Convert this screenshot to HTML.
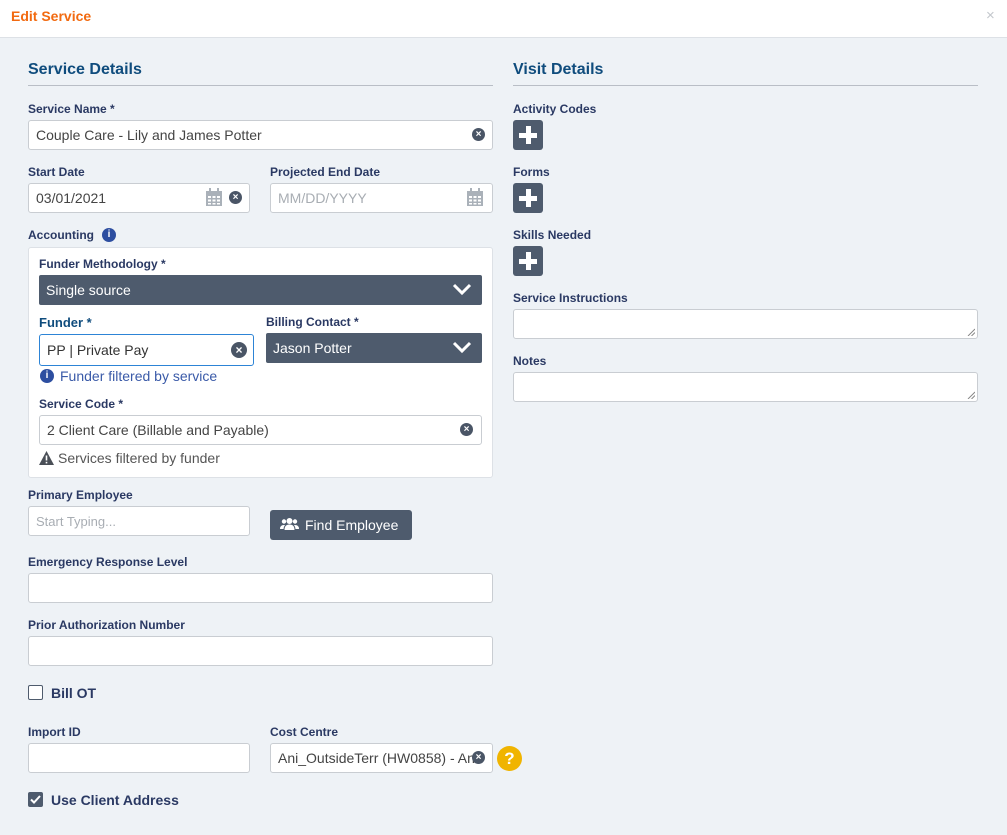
<!DOCTYPE html>
<html><head><meta charset="utf-8"><style>
*{box-sizing:border-box;margin:0;padding:0}
body{width:1007px;height:835px;background:#eef2f6;font-family:"Liberation Sans",Arial,sans-serif;position:relative;overflow:hidden}
.a{position:absolute}
.hdr{left:0;top:0;width:1007px;height:38px;background:#fff;border-bottom:1px solid #dde1e6}
.lbl{position:absolute;font-size:12px;font-weight:bold;color:#2a3963;line-height:14px}
.sec{position:absolute;font-size:16px;font-weight:bold;color:#0f4c7d}
.ln{position:absolute;height:1px;background:#b9bec6}
.in{position:absolute;background:#fff;border:1px solid #c9cdd2;border-radius:3px;font-size:14px;color:#444;padding-left:7px;display:flex;align-items:center}
.ph{color:#a8adb3}
.sel{position:absolute;background:#4e5b6d;border-radius:2px;color:#fff;font-size:14px;padding-left:7px;display:flex;align-items:center}
.x{position:absolute;width:13px;height:13px;border-radius:50%;background:#4a5566;color:#fff;font-size:10px;font-weight:bold;line-height:13px;text-align:center}
.plus{position:absolute;width:30px;height:30px;background:#4e5b6d;border-radius:3px}
.plus:before{content:"";position:absolute;left:6px;top:12.5px;width:18px;height:5px;background:#fff}
.plus:after{content:"";position:absolute;left:12.5px;top:6px;width:5px;height:18px;background:#fff}
.chev{position:absolute;right:10px;top:8px}
.rz{position:absolute;right:2px;bottom:2px}
</style></head><body>
<div class="a hdr"></div>
<div class="a" style="left:11px;top:8px;font-size:14px;font-weight:bold;color:#f26a10">Edit Service</div>
<div class="a" style="left:986px;top:7px;font-size:15px;color:#c3c7cc">×</div>

<div class="sec" style="left:28px;top:61px">Service Details</div>
<div class="ln" style="left:28px;top:85px;width:465px"></div>
<div class="sec" style="left:513px;top:61px">Visit Details</div>
<div class="ln" style="left:513px;top:85px;width:465px"></div>

<div class="lbl" style="left:28px;top:102px">Service Name *</div>
<div class="in" style="left:28px;top:120px;width:465px;height:30px">Couple Care - Lily and James Potter</div>
<div class="x" style="left:472px;top:128px">×</div>

<div class="lbl" style="left:28px;top:165px">Start Date</div>
<div class="in" style="left:28px;top:183px;width:222px;height:30px">03/01/2021</div>
<svg class="a" style="left:205px;top:188px" width="18" height="19" viewBox="0 0 18 19"><rect x="1" y="3" width="16" height="15" fill="#aab1b9"/><rect x="4" y="0" width="2" height="5" fill="#aab1b9"/><rect x="12" y="0" width="2" height="5" fill="#aab1b9"/><g fill="#fff"><rect x="3" y="8" width="3" height="2"/><rect x="7.5" y="8" width="3" height="2"/><rect x="12" y="8" width="3" height="2"/><rect x="3" y="11.5" width="3" height="2"/><rect x="7.5" y="11.5" width="3" height="2"/><rect x="12" y="11.5" width="3" height="2"/><rect x="3" y="15" width="3" height="1.5"/><rect x="7.5" y="15" width="3" height="1.5"/><rect x="12" y="15" width="3" height="1.5"/></g></svg>
<div class="x" style="left:229px;top:191px">×</div>
<div class="lbl" style="left:270px;top:165px">Projected End Date</div>
<div class="in ph" style="left:270px;top:183px;width:223px;height:30px"><span class="ph">MM/DD/YYYY</span></div>
<svg class="a" style="left:466px;top:188px" width="18" height="19" viewBox="0 0 18 19"><rect x="1" y="3" width="16" height="15" fill="#aab1b9"/><rect x="4" y="0" width="2" height="5" fill="#aab1b9"/><rect x="12" y="0" width="2" height="5" fill="#aab1b9"/><g fill="#fff"><rect x="3" y="8" width="3" height="2"/><rect x="7.5" y="8" width="3" height="2"/><rect x="12" y="8" width="3" height="2"/><rect x="3" y="11.5" width="3" height="2"/><rect x="7.5" y="11.5" width="3" height="2"/><rect x="12" y="11.5" width="3" height="2"/><rect x="3" y="15" width="3" height="1.5"/><rect x="7.5" y="15" width="3" height="1.5"/><rect x="12" y="15" width="3" height="1.5"/></g></svg>

<div class="lbl" style="left:28px;top:228px">Accounting</div>
<div class="a" style="left:102px;top:228px;width:14px;height:14px;border-radius:50%;background:#2d4ea0;color:#fff;font-size:10px;font-weight:bold;text-align:center;line-height:14px">i</div>

<div class="a" style="left:28px;top:247px;width:465px;height:231px;background:#fff;border:1px solid #dde1e6;border-radius:3px"></div>
<div class="lbl" style="left:39px;top:257px">Funder Methodology *</div>
<div class="sel" style="left:39px;top:275px;width:443px;height:30px">Single source<svg class="chev" width="20" height="13" viewBox="0 0 20 13"><path d="M2 2 L10 10 L18 2" stroke="#fff" stroke-width="3" fill="none"/></svg></div>
<div class="a" style="left:39px;top:315px;font-size:13px;font-weight:bold;color:#0f4c7d">Funder *</div>
<div class="in" style="left:39px;top:334px;width:215px;height:32px;border-color:#2d84d6;color:#333">PP | Private Pay</div>
<div class="x" style="left:231px;top:342px;width:16px;height:16px;line-height:16px;font-size:12px">×</div>
<div class="lbl" style="left:266px;top:315px">Billing Contact *</div>
<div class="sel" style="left:266px;top:333px;width:216px;height:30px">Jason Potter<svg class="chev" width="20" height="13" viewBox="0 0 20 13"><path d="M2 2 L10 10 L18 2" stroke="#fff" stroke-width="3" fill="none"/></svg></div>
<div class="a" style="left:40px;top:369px;width:14px;height:14px;border-radius:50%;background:#2d4ea0;color:#fff;font-size:10px;font-weight:bold;text-align:center;line-height:14px">i</div>
<div class="a" style="left:60px;top:368px;font-size:14px;color:#3a5aa8">Funder filtered by service</div>
<div class="lbl" style="left:39px;top:397px">Service Code *</div>
<div class="in" style="left:39px;top:415px;width:443px;height:30px">2 Client Care (Billable and Payable)</div>
<div class="x" style="left:460px;top:423px">×</div>
<svg class="a" style="left:39px;top:451px" width="15" height="14" viewBox="0 0 15 14"><path d="M7.5 0 L15 14 L0 14Z" fill="#4a4f57"/><rect x="6.7" y="4.5" width="1.6" height="5" fill="#fff"/><rect x="6.7" y="10.8" width="1.6" height="1.6" fill="#fff"/></svg>
<div class="a" style="left:58px;top:450px;font-size:14px;color:#555">Services filtered by funder</div>

<div class="lbl" style="left:28px;top:488px">Primary Employee</div>
<div class="in" style="left:28px;top:506px;width:222px;height:30px"><span class="ph" style="font-size:13px">Start Typing...</span></div>
<div class="a" style="left:270px;top:510px;width:142px;height:30px;background:#4e5b6d;border-radius:3px;color:#fff;font-size:14px;line-height:30px;padding-left:35px">Find Employee</div>
<svg class="a" style="left:280px;top:517px" width="19" height="14" viewBox="0 0 19 14"><circle cx="9.5" cy="4" r="3" fill="#fff"/><circle cx="4" cy="4.5" r="2.2" fill="#fff"/><circle cx="15" cy="4.5" r="2.2" fill="#fff"/><path d="M4.5 13 Q4.5 7.5 9.5 7.5 Q14.5 7.5 14.5 13Z" fill="#fff"/><path d="M0 12 Q0 8 4 8 L5 8 Q3.5 10 3.5 12Z M19 12 Q19 8 15 8 L14 8 Q15.5 10 15.5 12Z" fill="#fff"/></svg>

<div class="lbl" style="left:28px;top:555px">Emergency Response Level</div>
<div class="in" style="left:28px;top:573px;width:465px;height:30px"></div>
<div class="lbl" style="left:28px;top:618px">Prior Authorization Number</div>
<div class="in" style="left:28px;top:636px;width:465px;height:30px"></div>

<div class="a" style="left:28px;top:685px;width:15px;height:15px;border:1.5px solid #4e5b6d;border-radius:2px;background:#fff"></div>
<div class="a" style="left:51px;top:685px;font-size:14px;font-weight:bold;color:#2a3963">Bill OT</div>

<div class="lbl" style="left:28px;top:725px">Import ID</div>
<div class="in" style="left:28px;top:743px;width:222px;height:30px"></div>
<div class="lbl" style="left:270px;top:725px">Cost Centre</div>
<div class="in" style="left:270px;top:743px;width:223px;height:30px;overflow:hidden;white-space:nowrap;font-size:14px">Ani_OutsideTerr (HW0858) - Ani</div>
<div class="x" style="left:472px;top:751px">×</div>
<div class="a" style="left:497px;top:746px;width:25px;height:25px;border-radius:50%;background:#f0b400;color:#fff;font-size:17px;font-weight:bold;text-align:center;line-height:25px">?</div>

<div class="a" style="left:28px;top:792px;width:15px;height:15px;background:#4e5b6d;border-radius:2px"></div>
<svg class="a" style="left:30px;top:795px" width="11" height="9" viewBox="0 0 11 9"><path d="M1 4.5 L4 7.5 L10 1" stroke="#fff" stroke-width="2" fill="none"/></svg>
<div class="a" style="left:51px;top:792px;font-size:14px;font-weight:bold;color:#2a3963">Use Client Address</div>

<div class="lbl" style="left:513px;top:102px">Activity Codes</div>
<div class="plus" style="left:513px;top:120px"></div>
<div class="lbl" style="left:513px;top:165px">Forms</div>
<div class="plus" style="left:513px;top:183px"></div>
<div class="lbl" style="left:513px;top:228px">Skills Needed</div>
<div class="plus" style="left:513px;top:246px"></div>
<div class="lbl" style="left:513px;top:291px">Service Instructions</div>
<div class="in" style="left:513px;top:309px;width:465px;height:30px"><svg class="rz" width="8" height="8" viewBox="0 0 8 8"><path d="M1 8 L8 1 M4.5 8 L8 4.5" stroke="#888" stroke-width="1"/></svg></div>
<div class="lbl" style="left:513px;top:354px">Notes</div>
<div class="in" style="left:513px;top:372px;width:465px;height:30px"><svg class="rz" width="8" height="8" viewBox="0 0 8 8"><path d="M1 8 L8 1 M4.5 8 L8 4.5" stroke="#888" stroke-width="1"/></svg></div>
</body></html>
